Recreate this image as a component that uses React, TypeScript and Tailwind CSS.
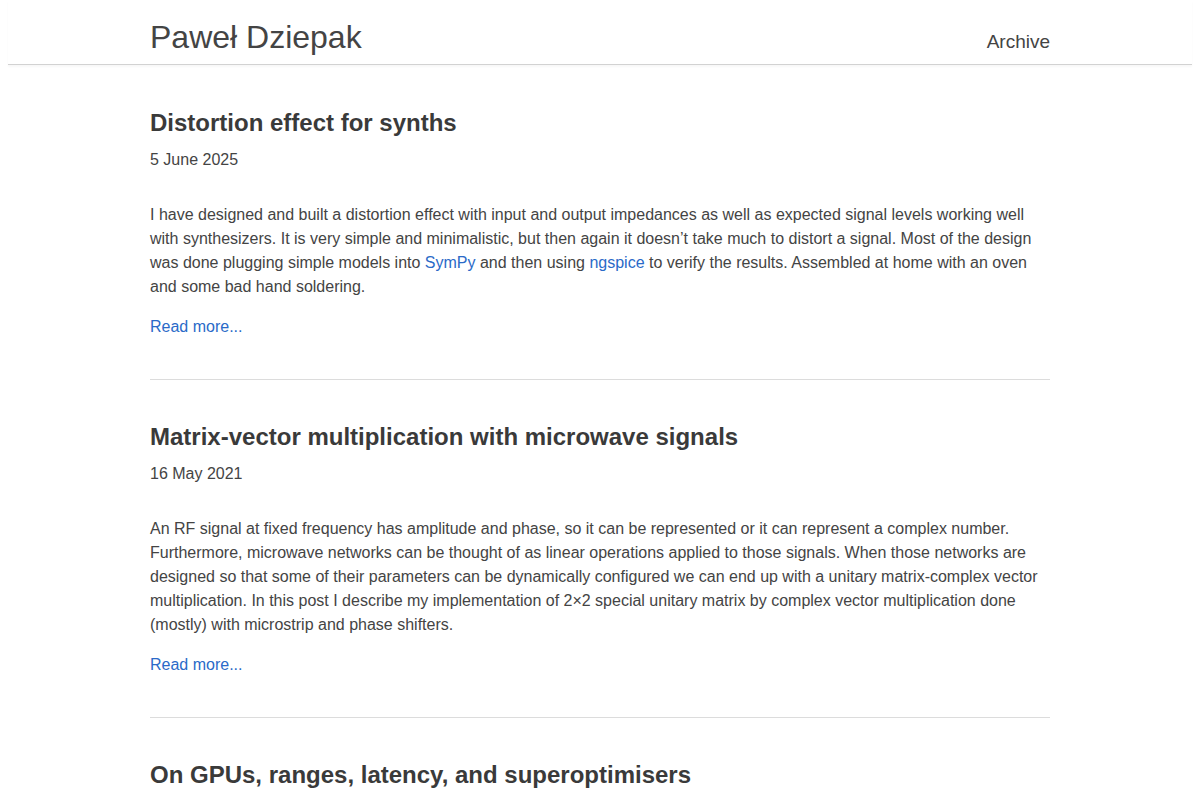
import React from 'react';

type Post = {
  title: string;
  date: string;
  body: React.ReactNode;
};

const link = 'text-[#2a6ac8] hover:underline';

const posts: Post[] = [
  {
    title: 'Distortion effect for synths',
    date: '5 June 2025',
    body: (
      <>
        I have designed and built a distortion effect with input and output impedances as well as expected signal levels
        working well with synthesizers. It is very simple and minimalistic, but then again it doesn’t take much to distort
        a signal. Most of the design was done plugging simple models into{' '}
        <a href="#" className={link}>SymPy</a> and then using{' '}
        <a href="#" className={link}>ngspice</a> to verify the results. Assembled at home with an oven and some bad hand
        soldering.
      </>
    ),
  },
  {
    title: 'Matrix-vector multiplication with microwave signals',
    date: '16 May 2021',
    body: (
      <>
        An RF signal at fixed frequency has amplitude and phase, so it can be represented or it can represent a complex
        number. Furthermore, microwave networks can be thought of as linear operations applied to those signals. When those
        networks are designed so that some of their parameters can be dynamically configured we can end up with a unitary
        matrix-complex vector multiplication. In this post I describe my implementation of 2×2 special unitary matrix by
        complex vector multiplication done (mostly) with microstrip and phase shifters.
      </>
    ),
  },
  {
    title: 'On GPUs, ranges, latency, and superoptimisers',
    date: '3 November 2019',
    body: (
      <>
        In this post I describe my experiments with a superoptimiser and ranges of values computed on a GPU.
      </>
    ),
  },
];

export default function App() {
  return (
    <div className="min-h-screen bg-white px-2 text-[#444] font-['Liberation_Sans',Arial,sans-serif]">
      <header className="h-[65px] border-b border-[#d2d2d2] shadow-[0_2px_2px_rgba(0,0,0,0.03)]">
        <div className="mx-auto flex w-[900px] items-baseline justify-between pt-[19px]">
          <a href="#" className="text-[32px] leading-[36px] text-[#444]">
            Paweł Dziepak
          </a>
          <nav>
            <a href="#" className="text-[19px] leading-[24px] text-[#444]">
              Archive
            </a>
          </nav>
        </div>
      </header>

      <main className="mx-auto w-[900px] pt-[44px] pb-10">
        {posts.map((post, i) => (
          <article key={post.title}>
            {i > 0 && <hr className="mt-[40px] mb-[43px] border-0 border-t border-[#dcdcdc]" />}
            <h2 className="text-[24px] font-bold leading-[27px] text-[#3a3a3a]">
              <a href="#">{post.title}</a>
            </h2>
            <div className="mt-[12px] text-[16px] leading-6">{post.date}</div>
            <p className="mt-[31px] text-[16px] leading-6">{post.body}</p>
            <p className="mt-4 text-[16px] leading-6">
              <a href="#" className={link}>Read more...</a>
            </p>
          </article>
        ))}
      </main>
    </div>
  );
}
